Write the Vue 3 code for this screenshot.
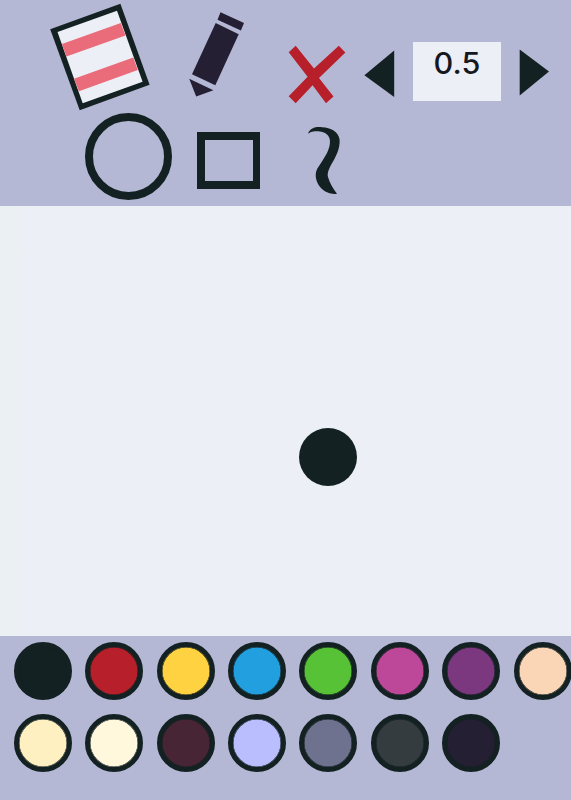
<script setup>
import { ref } from 'vue'

const size = ref(0.5)
const color = ref('#142122')
const rows = [
  ['#142122', '#b7202b', '#ffd241', '#219fde', '#58c236', '#bd4899', '#7b387f', '#fad5b6'],
  ['#fff0c2', '#fff8dc', '#482534', '#babeff', '#6e728e', '#343c40', '#241f33'],
]
const step = (d) => {
  size.value = Math.max(0.1, Math.round((size.value + d) * 10) / 10)
}
</script>

<template>
  <main class="app">
    <header class="toolbar">
      <div class="tools">
        <button class="eraser" aria-label="Eraser">
          <svg width="100" height="108" viewBox="50 3 100 108">
            <path fill="#142122" d="M50.2 29.3 120.4 3.7 149.6 84.7 79.7 110.2Z" />
            <path fill="#eceff5" d="M57.5 32 117 10.8 142.6 81.7 82.7 103.2Z" />
            <path fill="#ea6b79" d="M61.9 43.9 120.8 22.9 125.5 35.6 66.4 56.6ZM74 78.8 133.3 57.5 137.8 70 79 91.2Z" />
          </svg>
        </button>
        <button class="pencil" aria-label="Pencil">
          <svg width="56" height="86" viewBox="189 11 56 86">
            <g fill="#241f33">
              <path d="M220.5 12.2 244 23 240.9 30.4 217.5 19.7Z" />
              <path d="M215.7 23 238.7 34.3 215.3 85.3 192 74.3Z" />
              <path d="M189.2 78.8 213.4 90.3 196.2 96.5Z" />
            </g>
          </svg>
        </button>
        <button class="clear" aria-label="Clear">
          <svg width="58" height="59" viewBox="288 45 58 59">
            <path fill="#b7202b" d="M295.7 45.7 314 68.5 338.8 45.8 345.4 52.5 319 78 333.5 96.5 326 103.3 312.6 85.3 295.7 103.3 288.7 96.3 307.6 76.8 288.7 52.3Z" />
          </svg>
        </button>
        <button class="smaller" aria-label="Smaller" @click="step(-0.1)">
          <svg width="31" height="48" viewBox="364 50 31 48">
            <path fill="#142122" d="M364.4 75.2 394.2 50.4V97Z" />
          </svg>
        </button>
        <output class="size"><span class="value">{{ size }}</span></output>
        <button class="larger" aria-label="Larger" @click="step(0.1)">
          <svg width="31" height="48" viewBox="519 49 31 48">
            <path fill="#142122" d="M519.7 49.5 549 71.4 519.7 95.6Z" />
          </svg>
        </button>
      </div>
      <div class="shapes">
        <button class="circle" aria-label="Circle"></button>
        <button class="square" aria-label="Square"></button>
        <button class="line" aria-label="Line">
          <svg width="34" height="70" viewBox="307 126 34 70">
            <path fill="#142122" d="M308 133.2C310.5 127.8 316 126.3 322 127.2C331 127.8 338.3 131.5 339.6 139.5C340.3 149 335.2 158 331 165C328 171 327.3 173.5 328 177C329.5 182.5 333 188.5 337 193.7C332 194.8 325 192.5 320.5 187.5C315.5 181.5 314.3 174 317.5 168.3C320.5 163.5 324 158.5 327 153C330.2 146.5 331.3 139.5 328 135.5C324.5 131 315.5 130.4 310.5 132.2C309.5 132.6 309 133.8 308 133.2Z" />
          </svg>
        </button>
      </div>
    </header>
    <section class="canvas">
      <div class="brush" :style="{ background: color }"></div>
    </section>
    <footer class="palette">
      <div v-for="(row, r) in rows" :key="r" class="row">
        <button
          v-for="c in row"
          :key="c"
          class="swatch"
          :aria-label="c"
          :style="{ background: c }"
          @click="color = c"
        ></button>
      </div>
    </footer>
  </main>
</template>

<style>
body {
  margin: 0;
}
</style>

<style scoped>
.app {
  display: flex;
  flex-direction: column;
  width: 571px;
  height: 800px;
  overflow: hidden;
  background: #b4b8d5;
  font-family: Inter, "Liberation Sans", sans-serif;
}
button {
  box-sizing: border-box;
  flex: none;
  padding: 0;
  border: 0;
  background: none;
}
svg {
  display: block;
}
.toolbar {
  box-sizing: border-box;
  flex: none;
  height: 206px;
  padding-top: 3px;
}
.tools,
.shapes {
  display: flex;
  align-items: flex-start;
}
.tools {
  height: 110px;
  padding-left: 50px;
}
.pencil {
  margin: 8px 0 0 39px;
}
.clear {
  margin: 42px 0 0 43px;
}
.smaller {
  margin: 47px 0 0 18px;
}
.size {
  box-sizing: border-box;
  flex: none;
  width: 87.5px;
  height: 59px;
  margin: 39px 0 0 18px;
  background: #eceff5;
  color: #16181f;
  font-size: 30px;
  font-weight: 500;
  line-height: 43px;
  text-align: center;
}
.value {
  display: inline-block;
  transform: scaleX(1.02);
}
.larger {
  margin: 46px 0 0 18.5px;
}
.shapes {
  padding-left: 85px;
}
.circle {
  width: 87px;
  height: 87px;
  border: 8px solid #142122;
  border-radius: 50%;
}
.square {
  width: 63px;
  height: 57px;
  margin: 19px 0 0 25px;
  border: 8px solid #142122;
  border-width: 8px 7px 8px 8px;
}
.line {
  margin: 13px 0 0 47px;
}
.canvas {
  flex: none;
  box-sizing: border-box;
  height: 430px;
  padding: 222px 0 0 299.3px;
  background: linear-gradient(90deg, #ebf0f2 0 10px, #eceff6 30px);
}
.brush {
  width: 58px;
  height: 58px;
  border-radius: 50%;
}
.palette {
  display: flex;
  flex-direction: column;
  gap: 13.4px;
  padding: 6.2px 0 0 13.9px;
}
.row {
  display: flex;
  gap: 13.4px;
}
.swatch {
  width: 58px;
  height: 58px;
  border: 5px solid #142122;
  border-radius: 50%;
  box-shadow: inset 0 0 0 0.5px #142122;
}
</style>
